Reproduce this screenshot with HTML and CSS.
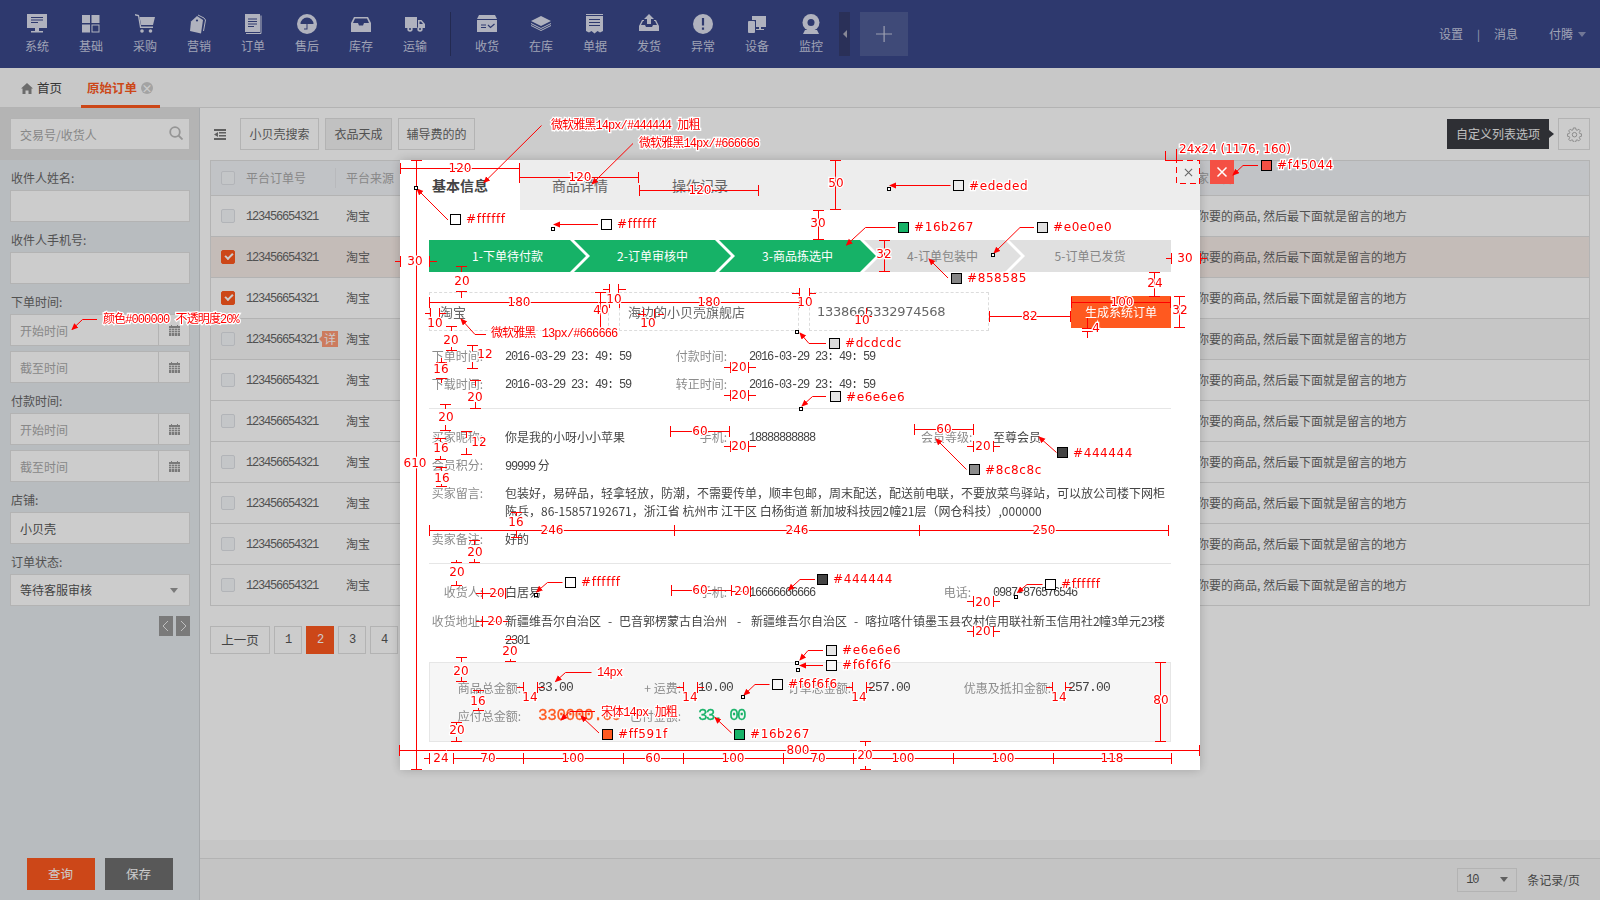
FILE: index.html
```html
<!DOCTYPE html>
<html lang="zh-CN">
<head>
  <meta charset="UTF-8" />
  <title>原始订单</title>
  <link rel="stylesheet" href="styles.css">
</head>
<body>
  <header class="topbar">
    <nav class="nav-group">
      <a class="nav-item"><svg class="nav-icon" viewBox="0 0 20 20"><path d="M0 0h20v14H0zM8 14h4v3H8zM4 17h12v1.500H4z"/><path class="cut" d="M4 3h12v1H4zM4 5.500h12v1H4zM4 8h7v1H4z"/></svg>系统</a>
      <a class="nav-item"><svg class="nav-icon" viewBox="0 0 20 20"><path fill-rule="evenodd" d="M1 1h8v8H1zM10.500 1h8v8h-8zM1 10.500h8v8H1zM10.500 10.500h8v8h-8zM11.500 11.500v6h6v-6z"/></svg>基础</a>
      <a class="nav-item"><svg class="nav-icon" viewBox="0 0 20 20"><path d="M0 0l4 1 2.200 11.500H18V14H5L3 2.200 0 1.500z"/><path d="M4.500 3H20l-2 8H6.200z"/><circle cx="7" cy="17" r="1.800"/><circle cx="15.500" cy="17" r="1.800"/></svg>采购</a>
      <a class="nav-item"><svg class="nav-icon" viewBox="0 0 20 20"><path d="M2 7.500L8 2l6 4-2 13.500L1 17z"/><circle class="cut" cx="8" cy="6.500" r="1.100"/><path class="line" d="M9 1l6 3 1.500 2-2 11"/></svg>营销</a>
      <a class="nav-item"><svg class="nav-icon" viewBox="0 0 20 20"><path d="M2 0h15v18H2z"/><path class="cut" d="M5 4.500h9v1H5zM5 7h9v1H5zM5 9.500h9v1H5zM5 12h6v1H5z"/><path class="line" d="M18 1.500v18H3"/></svg>订单</a>
      <a class="nav-item"><svg class="nav-icon" viewBox="0 0 20 20"><circle cx="10" cy="10" r="10"/><path class="cut" d="M3.500 10a6.500 6.500 0 0 1 13 0zM9.500 10h1v5.500H7v-1h2.500z"/></svg>售后</a>
      <a class="nav-item"><svg class="nav-icon" viewBox="0 0 20 20"><path d="M3 3h14l3 6v9H0V9z"/><path class="cut" d="M4 4.500h12l2 4.500h-5l-1 2.500H8L7 9H2z"/></svg>库存</a>
      <a class="nav-item"><svg class="nav-icon" viewBox="0 0 20 20"><path d="M0 3h12v11H0zM13 6h3.500l3.500 4v4h-7z"/><path class="cut" d="M14.500 7.500h1.500l2 2.500h-3.500z"/><circle cx="5" cy="15" r="2.700"/><circle class="cut" cx="5" cy="15" r="1"/><circle cx="15" cy="15" r="2.700"/><circle class="cut" cx="15" cy="15" r="1"/></svg>运输</a>
    </nav>
    <span class="nav-sep"></span>
    <nav class="nav-group">
      <a class="nav-item"><svg class="nav-icon" viewBox="0 0 20 20"><path d="M2 1h16l2 4H0zM0 6h20v12H0z"/><path class="cut" d="M4 10.500h5v1H4zM4 13h5v1H4z"/><path class="cut-line" d="M11 11l2.500 2.500 4-3.500"/></svg>收货</a>
      <a class="nav-item"><svg class="nav-icon" viewBox="0 0 20 20"><path d="M10 2l10 5-10 5L0 7z"/><path class="line" d="M0 9.500l10 5 10-5M0 11.500l10 5 10-5"/></svg>在库</a>
      <a class="nav-item"><svg class="nav-icon" viewBox="0 0 20 20"><path d="M1 0h17v1H1zM1 2h17v15l-3 1.500-2.500-1.500-3 2.500-3-2.500L4 18.500 1 17z"/><path class="cut" d="M4 5h11v1H4zM4 8h11v1H4zM4 11h11v1H4z"/></svg>单据</a>
      <a class="nav-item"><svg class="nav-icon" viewBox="0 0 20 20"><path d="M10 0l5 5h-3v5H8V5H5zM3 6h2v1H4l-2 4h4l1 2h6l1-2h4l-2-4h-1V6h2l3 6v5H0v-5z"/></svg>发货</a>
      <a class="nav-item"><svg class="nav-icon" viewBox="0 0 20 20"><circle cx="10" cy="10" r="10"/><path class="cut" d="M8.900 4h2.200v7.500H8.900zM8.900 13.500h2.200v2.200H8.900z"/></svg>异常</a>
      <a class="nav-item"><svg class="nav-icon" viewBox="0 0 20 20"><path d="M5 2h14v11h-5v2h3v1H9v-1h3v-2H9V6H5z"/><rect x="1" y="7" width="7" height="12" rx="1"/></svg>设备</a>
      <a class="nav-item"><svg class="nav-icon" viewBox="0 0 20 20"><circle cx="10" cy="8.500" r="8.500"/><circle class="cut" cx="10" cy="8.500" r="3.500"/><path d="M4 16h12l2 4H2z"/></svg>监控</a>
    </nav>
    <span class="nav-toggle"><i class="caret-left"></i></span>
    <span class="nav-add"><svg viewBox="0 0 16 16"><path d="M7.500 0h1.200v7.400H16v1.200H8.700V16H7.500V8.600H0V7.400h7.500z"/></svg></span>
    <div class="top-links">
      <span>设置</span>
      <span class="top-sep">|</span>
      <span>消息</span>
      <span class="top-user">付腾<i class="caret-down"></i></span>
    </div>
  </header>

  <div class="tabbar">
    <a class="page-tab">
      <svg class="home-icon" viewBox="0 0 12 11"><path d="M6 0l6 5.500h-1.500V11H7.500V7.500h-3V11h-3V5.500H0z"/></svg>首页
    </a>
    <a class="page-tab page-tab-on">原始订单<span class="tab-x">×</span></a>
  </div>

  <div class="workspace">
    <aside class="sidebar">
      <div class="side-search">
        <input class="field-input" placeholder="交易号/收货人">
        <svg class="search-icon" viewBox="0 0 14 14"><circle cx="6" cy="6" r="4.800"/><path d="M9.500 9.500L13.500 13.500"/></svg>
      </div>
      <div class="side-form">
        <label class="field-label">收件人姓名:</label>
        <input class="field-input">
        <label class="field-label">收件人手机号:</label>
        <input class="field-input">
        <label class="field-label">下单时间:</label>
        <div class="date-input"><input class="field-input" placeholder="开始时间"><span class="date-btn"><svg viewBox="0 0 11 11"><path d="M2 0h1v1h5V0h1v1h2v10H0V1h2z"/><path class="cal-grid" d="M0 3.500h11M0 5.500h11M0 7.500h11M2.500 3v8M5.500 3v8M8.500 3v8"/></svg></span></div>
        <div class="date-input date-next"><input class="field-input" placeholder="截至时间"><span class="date-btn"><svg viewBox="0 0 11 11"><path d="M2 0h1v1h5V0h1v1h2v10H0V1h2z"/><path class="cal-grid" d="M0 3.500h11M0 5.500h11M0 7.500h11M2.500 3v8M5.500 3v8M8.500 3v8"/></svg></span></div>
        <label class="field-label">付款时间:</label>
        <div class="date-input"><input class="field-input" placeholder="开始时间"><span class="date-btn"><svg viewBox="0 0 11 11"><path d="M2 0h1v1h5V0h1v1h2v10H0V1h2z"/><path class="cal-grid" d="M0 3.500h11M0 5.500h11M0 7.500h11M2.500 3v8M5.500 3v8M8.500 3v8"/></svg></span></div>
        <div class="date-input date-next"><input class="field-input" placeholder="截至时间"><span class="date-btn"><svg viewBox="0 0 11 11"><path d="M2 0h1v1h5V0h1v1h2v10H0V1h2z"/><path class="cal-grid" d="M0 3.500h11M0 5.500h11M0 7.500h11M2.500 3v8M5.500 3v8M8.500 3v8"/></svg></span></div>
        <label class="field-label">店铺:</label>
        <input class="field-input" value="小贝壳">
        <label class="field-label">订单状态:</label>
        <div class="field-select">等待客服审核<i class="caret-down"></i></div>
        <div class="side-pager">
          <span><svg viewBox="0 0 14 20"><path d="M9 5l-5 5 5 5"/></svg></span>
          <span><svg viewBox="0 0 14 20"><path d="M5 5l5 5-5 5"/></svg></span>
        </div>
      </div>
      <div class="side-actions">
        <button class="btn-query">查询</button>
        <button class="btn-save">保存</button>
      </div>
    </aside>

    <main class="main">
      <div class="content">
        <div class="toolbar">
          <svg class="menu-icon" viewBox="0 0 12 11"><path d="M0 0h12v2H0zM5 3h7v1.500H5zM5 6h7v1.500H5zM0 9h12v2H0zM4 3v5L0 5.500z"/></svg>
          <button class="tool-btn">小贝壳搜索</button>
          <button class="tool-btn tool-btn-on">衣品天成</button>
          <button class="tool-btn tool-btn-last">辅导费的的</button>
          <span class="tip">自定义列表选项</span>
          <span class="gear-btn"><svg viewBox="0 0 16 16"><path d="M6.800 1h2.400l.4 2 1.200.5 1.800-1.100 1.600 1.700-1.100 1.700.5 1.200 2 .4v2.400l-2 .4-.5 1.200 1.100 1.700-1.600 1.700-1.800-1.100-1.200.5-.4 2H6.800l-.4-2-1.200-.5-1.800 1.100-1.600-1.700 1.100-1.700-.5-1.200-2-.4V7.400l2-.4.5-1.200-1.100-1.700 1.600-1.700 1.800 1.100L6.400 3z"/><circle cx="8" cy="8.200" r="2.400"/></svg></span>
        </div>

        <div class="order-table">
          <div class="tr th">
            <span class="c-check"><i class="check"></i></span>
            <span class="c-no">平台订单号</span>
            <span class="c-src">平台来源</span>
            <span class="c-msg">买家留言</span>
          </div>
          <div class="tr"><span class="c-check"><i class="check"></i></span><span class="c-no mono">123456654321</span><span class="c-src">淘宝</span><span class="c-msg">是你要的商品, 然后最下面就是留言的地方</span></div>
          <div class="tr tr-on"><span class="c-check"><i class="check check-on"></i></span><span class="c-no mono">123456654321</span><span class="c-src">淘宝</span><span class="c-msg">是你要的商品, 然后最下面就是留言的地方</span></div>
          <div class="tr"><span class="c-check"><i class="check check-on"></i></span><span class="c-no mono">123456654321</span><span class="c-src">淘宝</span><span class="c-msg">是你要的商品, 然后最下面就是留言的地方</span></div>
          <div class="tr tr-hover"><span class="c-check"><i class="check"></i></span><span class="c-no"><span class="mono">123456654321</span><em class="badge">详</em></span><span class="c-src">淘宝</span><span class="c-msg">是你要的商品, 然后最下面就是留言的地方</span></div>
          <div class="tr"><span class="c-check"><i class="check"></i></span><span class="c-no mono">123456654321</span><span class="c-src">淘宝</span><span class="c-msg">是你要的商品, 然后最下面就是留言的地方</span></div>
          <div class="tr"><span class="c-check"><i class="check"></i></span><span class="c-no mono">123456654321</span><span class="c-src">淘宝</span><span class="c-msg">是你要的商品, 然后最下面就是留言的地方</span></div>
          <div class="tr"><span class="c-check"><i class="check"></i></span><span class="c-no mono">123456654321</span><span class="c-src">淘宝</span><span class="c-msg">是你要的商品, 然后最下面就是留言的地方</span></div>
          <div class="tr"><span class="c-check"><i class="check"></i></span><span class="c-no mono">123456654321</span><span class="c-src">淘宝</span><span class="c-msg">是你要的商品, 然后最下面就是留言的地方</span></div>
          <div class="tr"><span class="c-check"><i class="check"></i></span><span class="c-no mono">123456654321</span><span class="c-src">淘宝</span><span class="c-msg">是你要的商品, 然后最下面就是留言的地方</span></div>
          <div class="tr"><span class="c-check"><i class="check"></i></span><span class="c-no mono">123456654321</span><span class="c-src">淘宝</span><span class="c-msg">是你要的商品, 然后最下面就是留言的地方</span></div>
        </div>

        <div class="pager">
          <a class="pg pg-prev">上一页</a>
          <a class="pg mono">1</a>
          <a class="pg mono pg-on">2</a>
          <a class="pg mono">3</a>
          <a class="pg mono">4</a>
        </div>
      </div>
      <div class="band"></div>
      <div class="pagefoot">
        <span class="size-select mono">10<i class="caret-down"></i></span>
        <span>条记录/页</span>
      </div>
    </main>
  </div>

  <div class="mask"></div>

  <section class="modal">
    <div class="modal-tabs">
      <a class="modal-tab modal-tab-on">基本信息</a>
      <a class="modal-tab">商品详情</a>
      <a class="modal-tab">操作记录</a>
      <a class="modal-close"><svg viewBox="0 0 10 10"><path d="M1 1l8 8M9 1l-8 8"/></svg></a>
    </div>
    <div class="modal-body">
      <div class="steps">
        <div class="step step-done step-first">1-下单待付款</div>
        <div class="step step-done">2-订单审核中</div>
        <div class="step step-done">3-商品拣选中</div>
        <div class="step">4-订单包装中</div>
        <div class="step step-last">5-订单已发货</div>
      </div>

      <div class="source-row">
        <div class="source-box">淘宝</div>
        <div class="source-box source-shop">海边的小贝壳旗舰店</div>
        <div class="source-box source-num">1338665332974568</div>
        <button class="btn-make">生成系统订单</button>
      </div>

      <div class="info info-first">
        <span class="k">下单时间:</span><span class="v mono">2016-03-29 23: 49: 59</span>
        <span class="k">付款时间:</span><span class="v mono">2016-03-29 23: 49: 59</span>
      </div>
      <div class="info">
        <span class="k">下载时间:</span><span class="v mono">2016-03-29 23: 49: 59</span>
        <span class="k">转正时间:</span><span class="v mono">2016-03-29 23: 49: 59</span>
      </div>
      <div class="divider divider-a"></div>

      <div class="info">
        <span class="k">买家昵称:</span><span class="v">你是我的小呀小小苹果</span>
        <span class="k">手机:</span><span class="v mono">18888888888</span>
        <span class="k">会员等级:</span><span class="v">至尊会员</span>
      </div>
      <div class="info">
        <span class="k">会员积分:</span><span class="v"><span class="mono">99999</span> 分</span>
      </div>
      <div class="info info-long">
        <span class="k">买家留言:</span>
        <span class="v v-wide">包装好&#65292;易碎品&#65292;轻拿轻放&#65292;防潮&#65292;不需要传单&#65292;顺丰包邮&#65292;周末配送&#65292;配送前电联&#65292;不要放菜鸟驿站&#65292;可以放公司楼下网柜<br>陈兵&#65292;86-15857192671&#65292;浙江省 杭州市 江干区 白杨街道 新加坡科技园2幢21层&#65288;网仓科技&#65289;,000000</span>
      </div>
      <div class="info info-note">
        <span class="k">卖家备注:</span><span class="v">好的</span>
      </div>
      <div class="divider divider-b"></div>

      <div class="info">
        <span class="k">收货人:</span><span class="v">白居易</span>
        <span class="k">手机:</span><span class="v mono">16666666666</span>
        <span class="k">电话:</span><span class="v mono">0987-876576546</span>
      </div>
      <div class="info info-long info-addr">
        <span class="k">收货地址:</span>
        <span class="v v-wide">新疆维吾尔自治区<i class="dash">-</i>巴音郭楞蒙古自治州<i class="dash dash-wide">-</i>新疆维吾尔自治区<i class="dash">-</i>喀拉喀什镇墨玉县农村信用联社新玉信用社<span class="num-tight">2</span>幢<span class="num-tight">3</span>单元<span class="num-tight">23</span>楼<br><span class="mono">2301</span></span>
      </div>

      <div class="summary">
        <span class="k">商品总金额:</span><span class="v mono-lg">33.00</span>
        <span class="k">+ 运费:</span><span class="v mono-lg">10.00</span>
        <span class="k">订单总金额:</span><span class="v mono-lg">257.00</span>
        <span class="k">优惠及抵扣金额:</span><span class="v mono-lg">257.00</span>
        <span class="k">应付总金额:</span><span class="v amount amount-due">330000.00</span>
        <span class="k">已付金额:</span><span class="v amount amount-paid">33. 00</span>
      </div>
    </div>
  </section>

  <!-- redline notes from the designer, drawn over the whole page -->
  <svg class="redline" viewBox="0 0 1600 900">
    <defs>
      <marker id="ah" markerWidth="7" markerHeight="7" refX="6" refY="3" orient="auto" markerUnits="userSpaceOnUse"><path d="M0 0L7 3 0 6z" fill="#f00"/></marker>
    </defs>

    <rect x="1210" y="160" width="24" height="24" fill="#f45044"/>
    <path d="M1217.500 167.500l9 9M1226.500 167.500l-9 9" stroke="#fff" stroke-width="1.500" fill="none"/>
    <rect class="dashbox" x="1176.500" y="160.500" width="23" height="23"/>

    <g class="dims">
      <path d="M400.500 168.500H519.500M400.500 163v11M519.500 163v11"/>
      <path d="M519.500 177.500H638.500M519.500 172v11M638.500 172v11"/>
      <path d="M639.500 190.500H758.500M639.500 185v11M758.500 185v11"/>
      <path d="M416.500 160.500V769.500M411 160.500h11M411 769.500h11"/>
      <path d="M395 261.500h5.500M400.500 256v11M429.500 256v11M429.500 261.500h7"/>
      <path d="M461.500 266v6M456 266.500h11M461.500 292v6M456 291.500h11"/>
      <path d="M429.500 302.500H609.500M429.500 297v11M609.500 297v11"/>
      <path d="M603 289.500h6.500M609.500 284v11M618.500 284v11M618.500 289.500h7"/>
      <path d="M600.500 292v38M595 292.500h11M595 330.500h11"/>
      <path d="M619.500 302.500H799.500M619.500 297v11M799.500 297v11"/>
      <path d="M425 313.500h6M430.500 308v11M439.500 308v11M439.500 313.500h6"/>
      <path d="M638 314.500h8M658 314.500h6M643.500 309v11M654.500 309v11"/>
      <path d="M451.500 327v4M446 326.500h11M451.500 347v4M446 350.500h11"/>
      <path d="M792 293.500h7M799.500 288v11M809.500 288v11M809.500 293.500h6"/>
      <path d="M866.500 308v8M861 316.500h11"/>
      <path d="M472.500 345v6M467 345.500h11M472.500 362v6M467 368.500h11"/>
      <path d="M441.500 358v4M436 362.500h11M441.500 378v5M436 378.500h11"/>
      <path d="M475.500 380v6M470 380.500h11M475.500 402v6M470 408.500h11"/>
      <path d="M445.500 404v5M440 404.500h11M445.500 425v5M440 430.500h11"/>
      <path d="M724 367.500h6.500M730.500 362v11M748.500 362v11M748.500 367.500h7"/>
      <path d="M724 395.500h6.500M730.500 390v11M748.500 390v11M748.500 395.500h7"/>
      <path d="M724 446.500h6.500M730.500 441v11M748.500 441v11M748.500 446.500h7"/>
      <path d="M670.500 431.500H729.500M670.500 426v11M729.500 426v11"/>
      <path d="M466.500 432v6M461 431.500h11M466.500 448v7M461 454.500h11"/>
      <path d="M440.500 438v4M435 438.500h11M440.500 456v4M435 459.500h11"/>
      <path d="M441.500 468v3M436 467.500h11M441.500 484v3M436 486.500h11"/>
      <path d="M516.500 513v3M511 512.500h11M516.500 530v8M511 537.500h11"/>
      <path d="M429.500 530.500H1168.500M429.500 525v11M674.500 525v11M919.500 525v11M1168.500 525v11"/>
      <path d="M474.500 540v5M469 540.500h11M474.500 559v4M469 562.500h11"/>
      <path d="M456.500 560v3M451 562.500h11M456.500 581v4M451 585.500h11"/>
      <path d="M914.500 429.500H973.500M914.500 424v11M973.500 424v11"/>
      <path d="M967 446.500h6.500M973.500 441v11M993.500 441v11M993.500 446.500h6"/>
      <path d="M1165.500 151v10M1165.500 160.500h11M1176.500 149v11"/>
      <path d="M835.500 160.500v49M830 160.500h11M830 209.500h11"/>
      <path d="M818.500 210v29M813 210.500h11M813 239.500h11"/>
      <path d="M884.500 240v31M879 240.500h11M879 271.500h11"/>
      <path d="M1165.500 258.500h5.500M1171.500 253v11M1200.500 253v11M1200.500 258.500h6"/>
      <path d="M1154.500 272v24M1149 272.500h11M1149 296.500h11"/>
      <path d="M1071.500 302.500H1170.500M1071.500 297v11M1170.500 297v11"/>
      <path d="M1179.500 296v31M1174 296.500h11M1174 327.500h11"/>
      <path d="M989.500 316.500H1070.500M989.500 311v11M1070.500 311v11"/>
      <path d="M1087.500 318v10M1082 328.500h11M1087.500 331v7M1082 331.500h11"/>
      <path d="M476 593.500h6.500M482.500 588v11M482.500 593.500H505M505.500 588v11"/>
      <path d="M671.500 590.500H731.500M671.500 585v11M731.500 585v11M731.500 591.500H750M750.500 586v11"/>
      <path d="M967 601.500h6.500M973.500 596v11M993.500 596v11M993.500 601.500h6"/>
      <path d="M967 631.500h6.500M973.500 626v11M993.500 626v11M993.500 631.500h6"/>
      <path d="M476 621.500h6.500M482.500 616v11M482.500 621.500H508"/>
      <path d="M510.500 637v3M505 639.500h11M510.500 659v3M505 661.500h11"/>
      <path d="M461.500 657v5M456 657.500h11M461.500 677v5M456 681.500h11"/>
      <path d="M517 687.500h6.500M523.500 682v11M537.500 682v11M537.500 687.500h6"/>
      <path d="M677 687.500h6.500M683.500 682v11M697.500 682v11M697.500 687.500h6"/>
      <path d="M846 687.500h6.500M852.500 682v11M866.500 682v11M866.500 687.500h6"/>
      <path d="M1046 687.500h6.500M1052.500 682v11M1065.500 682v11M1065.500 687.500h6"/>
      <path d="M478.500 690v3M473 690.500h11M478.500 708v3M473 710.500h11"/>
      <path d="M456.500 722v3M451 722.500h11M456.500 737v5M451 741.500h11"/>
      <path d="M399.500 750.500H1199.500M399.500 745v11M1199.500 745v11"/>
      <path d="M424 758.500h5M429.500 753v11M453.500 753v11M453.500 758.500H1171.500M523.500 753v11M623.500 753v11M683.500 753v11M783.500 753v11M853.500 753v11M953.500 753v11M1053.500 753v11M1171.500 753v11"/>
      <path d="M1160.500 662v80M1155 662.500h11M1155 741.500h11"/>
      <path d="M865.500 742v4M860 741.500h11M865.500 766v4M860 769.500h11"/>
    </g>

    <g class="leads">
      <path d="M541.500 125.500L484 182.500"/>
      <path d="M633 143.500L592 184"/>
      <path d="M448 220L417 189"/>
      <path d="M598 224.500H554"/>
      <path d="M486 334.500H475L461 319"/>
      <path d="M97 319.500H82.500L72 329.500"/>
      <path d="M826 396.500H812.500L802 406"/>
      <path d="M826 343.500H809L800 333"/>
      <path d="M1056.500 452.500L1039 437"/>
      <path d="M966.500 469.500L936 439"/>
      <path d="M950.500 185.500H890"/>
      <path d="M895.500 227.500H865.500L846.500 245"/>
      <path d="M1034 227.500H1020L994 253"/>
      <path d="M948 278L929 259"/>
      <path d="M562.500 582.500H547.500L536.500 592"/>
      <path d="M815 579.500H800L788.500 590"/>
      <path d="M1042.500 584.500H1027L1017.500 592.500"/>
      <path d="M591.500 672.500H565.500L555.500 681.500"/>
      <path d="M769.500 684.500H755L744 695"/>
      <path d="M595 711.500H570L561 720"/>
      <path d="M599 733L581 716"/>
      <path d="M731.500 733L715 717.500"/>
      <path d="M823 650.500H808L800 660"/>
      <path d="M823 665.500H800"/>
      <path d="M1258 165.500H1243L1233 175"/>
    </g>

    <g class="dots">
      <rect x="414" y="186" width="3" height="3"/>
      <rect x="551" y="227" width="3" height="3"/>
      <rect x="887" y="187" width="3" height="3"/>
      <rect x="991" y="253" width="3" height="3"/>
      <rect x="795" y="330" width="3" height="3"/>
      <rect x="799" y="407" width="3" height="3"/>
      <rect x="534" y="593" width="3" height="3"/>
      <rect x="1014" y="595" width="3" height="3"/>
      <rect x="741" y="695" width="3" height="3"/>
      <rect x="795" y="661" width="3" height="3"/>
      <rect x="796" y="668" width="3" height="3"/>
    </g>

    <g class="swatches">
      <rect x="450.500" y="214.500" width="10" height="10" fill="#ffffff"/>
      <rect x="601.500" y="219.500" width="10" height="10" fill="#ffffff"/>
      <rect x="953.500" y="180.500" width="10" height="10" fill="#ededed"/>
      <rect x="898.500" y="222.500" width="10" height="10" fill="#16b267"/>
      <rect x="1037.500" y="222.500" width="10" height="10" fill="#e0e0e0"/>
      <rect x="951.500" y="273.500" width="10" height="10" fill="#858585"/>
      <rect x="829.500" y="338.500" width="10" height="10" fill="#dcdcdc"/>
      <rect x="830.500" y="391.500" width="10" height="10" fill="#e6e6e6"/>
      <rect x="1057.500" y="447.500" width="10" height="10" fill="#444444"/>
      <rect x="969.500" y="464.500" width="10" height="10" fill="#8c8c8c"/>
      <rect x="565.500" y="577.500" width="10" height="10" fill="#ffffff"/>
      <rect x="817.500" y="574.500" width="10" height="10" fill="#444444"/>
      <rect x="1045.500" y="579.500" width="10" height="10" fill="#ffffff"/>
      <rect x="772.500" y="679.500" width="10" height="10" fill="#f6f6f6"/>
      <rect x="826.500" y="645.500" width="10" height="10" fill="#e6e6e6"/>
      <rect x="826.500" y="660.500" width="10" height="10" fill="#f6f6f6"/>
      <rect x="602.500" y="729.500" width="10" height="10" fill="#ff591f"/>
      <rect x="734.500" y="729.500" width="10" height="10" fill="#16b267"/>
      <rect x="1261.500" y="160.500" width="10" height="10" fill="#f45044"/>
    </g>

    <g class="hex">
      <text x="466" y="219">#ffffff</text>
      <text x="617" y="224">#ffffff</text>
      <text x="969" y="186">#ededed</text>
      <text x="914" y="227">#16b267</text>
      <text x="1053" y="227">#e0e0e0</text>
      <text x="967" y="278">#858585</text>
      <text x="845" y="343">#dcdcdc</text>
      <text x="846" y="397">#e6e6e6</text>
      <text x="1073" y="453">#444444</text>
      <text x="985" y="470">#8c8c8c</text>
      <text x="581" y="582">#ffffff</text>
      <text x="833" y="579">#444444</text>
      <text x="1061" y="584">#ffffff</text>
      <text x="788" y="684">#f6f6f6</text>
      <text x="842" y="650">#e6e6e6</text>
      <text x="842" y="665">#f6f6f6</text>
      <text x="618" y="734">#ff591f</text>
      <text x="750" y="734">#16b267</text>
      <text x="1277" y="165">#f45044</text>
      <text class="hex-plain" x="1179" y="149">24x24 (1176, 160)</text>
    </g>

    <g class="dim-text">
      <text x="460" y="168">120</text>
      <text x="580" y="177">120</text>
      <text x="700" y="190">120</text>
      <text x="415" y="463">610</text>
      <text x="415" y="261">30</text>
      <text x="462" y="281">20</text>
      <text x="519" y="302">180</text>
      <text x="709" y="302">180</text>
      <text x="614" y="299">10</text>
      <text x="601" y="310">40</text>
      <text x="435" y="323">10</text>
      <text x="648" y="323">10</text>
      <text x="805" y="302">10</text>
      <text x="862" y="320">10</text>
      <text x="451" y="340">20</text>
      <text x="485" y="354">12</text>
      <text x="441" y="369">16</text>
      <text x="475" y="397">20</text>
      <text x="446" y="417">20</text>
      <text x="739" y="367">20</text>
      <text x="739" y="395">20</text>
      <text x="739" y="446">20</text>
      <text x="700" y="431">60</text>
      <text x="479" y="442">12</text>
      <text x="441" y="448">16</text>
      <text x="442" y="478">16</text>
      <text x="516" y="522">16</text>
      <text x="552" y="530">246</text>
      <text x="797" y="530">246</text>
      <text x="1044" y="530">250</text>
      <text x="475" y="552">20</text>
      <text x="457" y="572">20</text>
      <text x="944" y="429">60</text>
      <text x="983" y="446">20</text>
      <text x="836" y="183">50</text>
      <text x="818" y="223">30</text>
      <text x="884" y="254">32</text>
      <text x="1185" y="258">30</text>
      <text x="1155" y="283">24</text>
      <text x="1122" y="302">100</text>
      <text x="1180" y="310">32</text>
      <text x="1030" y="316">82</text>
      <text x="1096" y="328">4</text>
      <text x="497" y="593">20</text>
      <text x="700" y="590">60</text>
      <text x="742" y="591">20</text>
      <text x="983" y="602">20</text>
      <text x="983" y="631">20</text>
      <text x="495" y="621">20</text>
      <text x="510" y="651">20</text>
      <text x="461" y="671">20</text>
      <text x="530" y="697">14</text>
      <text x="690" y="697">14</text>
      <text x="859" y="697">14</text>
      <text x="1059" y="697">14</text>
      <text x="478" y="701">16</text>
      <text x="457" y="730">20</text>
      <text x="798" y="750">800</text>
      <text x="441" y="758">24</text>
      <text x="488" y="758">70</text>
      <text x="573" y="758">100</text>
      <text x="653" y="758">60</text>
      <text x="733" y="758">100</text>
      <text x="818" y="758">70</text>
      <text x="903" y="758">100</text>
      <text x="1003" y="758">100</text>
      <text x="1112" y="758">118</text>
      <text x="1161" y="700">80</text>
      <text x="865" y="755">20</text>
    </g>

    <g class="note">
      <text x="551" y="126">微软雅黑14px/#444444 加粗</text>
      <text x="639" y="144">微软雅黑14px/#666666</text>
      <text x="491" y="334">微软雅黑 13px/#666666</text>
      <text x="103" y="320">颜色#000000 不透明度20%</text>
      <text x="597" y="673">14px</text>
      <text x="601" y="713">宋体14px 加粗</text>
    </g>
  </svg>
</body>
</html>
```

FILE: styles.css
```css
* {
  box-sizing: border-box;
}

html, body {
  height: 100%;
}

body {
  margin: 0;
  display: flex;
  flex-direction: column;
  height: 900px;
  overflow: hidden;
  background: #fff;
  color: #666;
  font-family: "Noto Sans CJK SC", sans-serif;
  font-size: 12px;
  line-height: 1;
}

a, button, input {
  font: inherit;
  color: inherit;
}

button {
  border: none;
  padding: 0;
  background: none;
}

i, em {
  font-style: normal;
}

.mono {
  font-family: "Liberation Mono", "Noto Sans CJK SC", monospace;
  letter-spacing: -1.2px;
}

.caret-down {
  display: inline-block;
  width: 0;
  height: 0;
  border-left: 4px solid transparent;
  border-right: 4px solid transparent;
  border-top: 5px solid #999;
}

/* top bar */
.topbar {
  display: flex;
  align-items: center;
  flex: none;
  height: 68px;
  padding-left: 10px;
  background: #3a488a;
}

.nav-group {
  display: flex;
  align-self: flex-start;
  padding-top: 14px;
}

.nav-item {
  display: flex;
  flex-direction: column;
  align-items: center;
  width: 54px;
  color: #c8cce2;
  fill: #dcdfee;
}

.nav-icon {
  display: block;
  width: 20px;
  height: 20px;
  margin-bottom: 6px;
  overflow: visible;
}

.nav-icon .cut {
  fill: #3a488a;
}

.nav-icon .cut-line {
  fill: none;
  stroke: #3a488a;
  stroke-width: 1.2;
}

.nav-icon .line {
  fill: none;
  stroke: #dcdfee;
  stroke-width: 1;
}

.nav-sep {
  width: 1px;
  height: 44px;
  margin: 0 9px 0 8px;
  background: #2c3566;
}

.nav-toggle {
  display: flex;
  align-items: center;
  justify-content: center;
  width: 11px;
  height: 44px;
  margin-left: 1px;
  background: #353d6e;
}

.caret-left {
  width: 0;
  height: 0;
  border-top: 4px solid transparent;
  border-bottom: 4px solid transparent;
  border-right: 4px solid #aab;
}

.nav-add {
  display: flex;
  align-items: center;
  justify-content: center;
  width: 48px;
  height: 44px;
  margin-left: 10px;
  background: #4f5d96;
  fill: #c4c8de;
}

.nav-add svg {
  width: 16px;
  height: 16px;
}

.top-links {
  display: flex;
  align-items: center;
  margin-left: auto;
  margin-right: 14px;
  color: #c8cce2;
}

.top-sep {
  margin: 0 14px 0 14px;
  font-size: 11px;
}

.top-user {
  display: flex;
  align-items: center;
  margin-left: 31px;
}

.top-user .caret-down {
  margin-left: 5px;
  border-top-color: #8e95bc;
}

/* tabs under the top bar */
.tabbar {
  display: flex;
  flex: none;
  height: 40px;
  padding-left: 21px;
  background: #fafafa;
  border-bottom: 1px solid #e0e0e0;
}

.page-tab {
  display: flex;
  align-items: center;
  flex: none;
  height: 40px;
  color: #444;
  font-size: 12.500px;
}

.home-icon {
  width: 12px;
  height: 11px;
  margin-right: 4px;
  fill: #888;
}

.page-tab-on {
  margin-left: 19px;
  padding: 0 7px 0 6px;
  color: #ff591f;
  font-weight: 700;
  box-shadow: inset 0 -3px #ff591f;
}

.tab-x {
  display: flex;
  align-items: center;
  justify-content: center;
  width: 12px;
  height: 12px;
  margin-left: 4px;
  border-radius: 50%;
  background: #ccc;
  color: #fff;
  font-size: 11px;
  font-weight: 700;
}

.workspace {
  display: flex;
  flex: 1;
  min-height: 0;
}

/* left filter column */
.sidebar {
  display: flex;
  flex-direction: column;
  flex: none;
  width: 200px;
  background: #e6ebef;
  border-right: 1px solid #d0d4d8;
}

.side-search {
  position: relative;
  height: 52px;
  padding: 10px 9px 10px 10px;
  background: #e2e2e2;
}

.search-icon {
  position: absolute;
  top: 18px;
  right: 16px;
  width: 14px;
  height: 14px;
  fill: none;
  stroke: #bbb;
  stroke-width: 1.800;
}

.side-form {
  display: flex;
  flex-direction: column;
  padding: 0 9px 0 10px;
}

.field-label {
  height: 30px;
  padding: 6px 0 0 1px;
  line-height: 24px;
  color: #666;
}

.field-input {
  display: block;
  flex: none;
  width: 100%;
  height: 32px;
  padding: 0 9px;
  border: 1px solid #e0e0e0;
  background: #fff;
  color: #555;
  outline: none;
}

.field-input::placeholder {
  color: #aaa;
}

.date-input {
  display: flex;
}

.date-next {
  margin-top: 5px;
}

.date-input .field-input {
  flex: 1;
  min-width: 0;
  border-right: none;
}

.date-btn {
  display: flex;
  flex: none;
  align-items: center;
  justify-content: center;
  width: 32px;
  height: 32px;
  border: 1px solid #e0e0e0;
  background: #fff;
  padding-top: 1px;
}

.date-btn svg {
  width: 11px;
  height: 11px;
  fill: #999;
}

.cal-grid {
  fill: none;
  stroke: #fff;
  stroke-width: .6;
}

.field-select {
  display: flex;
  align-items: center;
  justify-content: space-between;
  height: 32px;
  padding: 0 11px 0 9px;
  border: 1px solid #e0e0e0;
  background: #fff;
  color: #555;
}

.side-pager {
  display: flex;
  justify-content: flex-end;
  gap: 3px;
  margin-top: 10px;
}

.side-pager span {
  display: block;
  width: 14px;
  height: 20px;
  background: #999;
}

.side-pager svg {
  display: block;
  fill: none;
  stroke: #eee;
  stroke-width: 1;
}

.side-actions {
  display: flex;
  justify-content: center;
  gap: 10px;
  margin-top: auto;
  padding-bottom: 10px;
}

.side-actions button {
  width: 68px;
  height: 32px;
  font-size: 12.500px;
  color: #fff;
}

.btn-query {
  background: #ff591f;
}

.btn-save {
  background: #6f6f6f;
}

/* right list */
.main {
  display: flex;
  flex-direction: column;
  flex: 1;
  min-width: 0;
}

.content {
  flex: 1;
  min-height: 0;
  padding: 0 10px;
  background: #fff;
}

.toolbar {
  display: flex;
  align-items: center;
  gap: 6px;
  height: 52px;
}

.menu-icon {
  width: 12px;
  height: 11px;
  margin: 0 8px 0 4px;
  fill: #777;
}

.tool-btn {
  height: 32px;
  padding: 0 8.500px;
  border: 1px solid #e0e0e0;
  background: #fff;
  color: #666;
}

.tool-btn-on {
  background: #f2f2f2;
}

.tool-btn-last {
  padding: 0 7.500px;
}

.tip {
  position: relative;
  display: flex;
  align-items: center;
  height: 30px;
  margin-left: auto;
  margin-right: 3px;
  padding: 0 9px;
  background: #3a3b42;
  color: #f0f0f0;
}

.tip::after {
  content: "";
  position: absolute;
  left: 100%;
  top: 11px;
  border-left: 5px solid #3a3b42;
  border-top: 4px solid transparent;
  border-bottom: 4px solid transparent;
}

.gear-btn {
  display: flex;
  align-items: center;
  justify-content: center;
  width: 32px;
  height: 32px;
  border: 1px solid #e0e0e0;
}

.gear-btn svg {
  width: 15px;
  height: 15px;
  fill: none;
  stroke: #aaa;
  stroke-width: 1;
}

.order-table {
  border: 1px solid #e0e0e0;
  border-bottom: none;
}

.tr {
  display: flex;
  align-items: center;
  height: 41px;
  border-bottom: 1px solid #e0e0e0;
  color: #666;
}

.th {
  height: 35px;
  background: #f2f4f8;
  color: #aaa;
}

.tr-on {
  background: #f6ebe6;
}

.tr-hover {
  background: #f8f8f8;
}

.c-check {
  display: flex;
  flex: none;
  width: 35px;
  padding-left: 10px;
}

.c-no {
  position: relative;
  display: flex;
  align-items: center;
  flex: none;
  width: 100px;
}

.c-no.mono,
.c-no .mono {
  padding-top: 1px;
}

.th .c-no::after {
  content: "";
  position: absolute;
  left: 89px;
  top: -4px;
  width: 1px;
  height: 20px;
  background: #e6e8ec;
}

.c-src {
  flex: none;
  width: 839px;
}

.c-msg {
  flex: 1;
  white-space: nowrap;
}

.check {
  display: block;
  position: relative;
  width: 14px;
  height: 14px;
  border: 1px solid #dfe2e7;
  border-radius: 2px;
  background: #f6f8fb;
}

.check-on {
  border-color: #ff591f;
  background: #ff591f;
}

.check-on::after {
  content: "";
  position: absolute;
  left: 3px;
  top: 2px;
  width: 6px;
  height: 3px;
  border-left: 2px solid #fff;
  border-bottom: 2px solid #fff;
  transform: rotate(-45deg);
}

.badge {
  position: relative;
  display: flex;
  align-items: center;
  justify-content: center;
  width: 16px;
  height: 16px;
  margin-left: 4px;
  background: #ff9a76;
  color: #fff;
}

.badge::before {
  content: "";
  position: absolute;
  right: 100%;
  top: 5px;
  border-right: 3px solid #ff9a76;
  border-top: 3px solid transparent;
  border-bottom: 3px solid transparent;
}

.pager {
  display: flex;
  gap: 4px;
  margin-top: 20px;
}

.pg {
  display: flex;
  align-items: center;
  justify-content: center;
  width: 28px;
  height: 28px;
  border: 1px solid #e0e0e0;
  color: #555;
}

.pg-prev {
  width: 60px;
  color: #555;
  font-size: 12.500px;
}

.pg-on {
  border-color: #ff591f;
  background: #ff591f;
  color: #fff;
}

.band {
  flex: none;
  height: 18px;
  background: #f8f8f8;
}

.pagefoot {
  display: flex;
  align-items: center;
  justify-content: flex-end;
  gap: 10px;
  flex: none;
  height: 42px;
  padding-right: 20px;
  border-top: 1px solid #e0e0e0;
  background: #f5f5f5;
  color: #555;
}

.size-select {
  display: flex;
  align-items: center;
  justify-content: space-between;
  width: 60px;
  height: 24px;
  padding: 0 8px;
  border: 1px solid #e0e0e0;
}

.size-select .caret-down {
  border-top-color: #777;
}

/* 20% black layer behind the dialog */
.mask {
  position: fixed;
  inset: 0;
  z-index: 10;
  background: rgba(0, 0, 0, .2);
}

/* dialog */
.modal {
  position: fixed;
  left: 400px;
  top: 160px;
  z-index: 20;
  width: 800px;
  height: 610px;
  background: #fff;
  box-shadow: 0 0 10px rgba(0, 0, 0, .2);
}

.modal-tabs {
  position: relative;
  display: flex;
  height: 50px;
  background: #ededed;
}

.modal-tab {
  display: flex;
  align-items: center;
  justify-content: center;
  width: 120px;
  font-size: 14px;
  color: #666;
}

.modal-tab-on {
  background: #fff;
  color: #444;
  font-weight: 700;
}

.modal-close {
  position: absolute;
  right: 0;
  top: 0;
  display: flex;
  align-items: center;
  justify-content: center;
  width: 24px;
  height: 24px;
}

.modal-close svg {
  width: 9px;
  height: 9px;
  fill: none;
  stroke: #666;
  stroke-width: 1.200;
}

.modal-body {
  padding: 30px 29px 0;
  color: #444;
}

.steps {
  display: flex;
  height: 32px;
}

.step {
  display: flex;
  align-items: center;
  justify-content: center;
  flex: none;
  width: 157px;
  margin-left: -12px;
  background: #e0e0e0;
  color: #858585;
  clip-path: polygon(0 0, calc(100% - 16px) 0, 100% 50%, calc(100% - 16px) 100%, 0 100%, 16px 50%);
}

.step-done {
  background: #16b267;
  color: #fff;
}

.step-first {
  margin-left: 0;
  clip-path: polygon(0 0, calc(100% - 16px) 0, 100% 50%, calc(100% - 16px) 100%, 0 100%);
}

.step-last {
  width: 162px;
  clip-path: polygon(0 0, 100% 0, 100% 100%, 0 100%, 16px 50%);
}

.source-row {
  display: flex;
  gap: 10px;
  margin-top: 20px;
}

.source-box {
  display: flex;
  align-items: center;
  width: 180px;
  height: 39px;
  padding: 0 10px;
  border: 1px dashed #dcdcdc;
  font-size: 13px;
  color: #666;
}

.source-shop {
  padding-left: 8px;
}

.source-num {
  padding-left: 7px;
  font-family: "DejaVu Sans", sans-serif;
  letter-spacing: -.25px;
}

.btn-make {
  width: 100px;
  height: 32px;
  margin: 4px 0 0 72px;
  background: #ff591f;
  color: #fff;
}

.info {
  display: grid;
  grid-template-columns: 76px 170px 74px 172px 72px 178px;
  height: 12px;
  margin-top: 16px;
  line-height: 12px;
  white-space: nowrap;
}

.info-first {
  margin-top: 19px;
}

.k {
  padding-right: 22px;
  text-align: right;
  color: #8c8c8c;
}

.info .v.mono {
  padding-top: 1px;
}

.info-long {
  height: 36px;
  margin-top: 13px;
  line-height: 18px;
  white-space: normal;
}

.info-long .k {
  line-height: 18px;
}

.v-wide {
  grid-column: 2 / 7;
}

.info-note {
  margin-top: 13px;
}

.divider {
  height: 1px;
  background: #e6e6e6;
}

.divider-a {
  margin: 18px 0 22px;
}

.divider-b {
  margin: 18px 0 22px;
}

.info-addr {
  margin-top: 14px;
}

.dash {
  display: inline-block;
  width: 18px;
  text-align: center;
}

.dash-wide {
  width: 24px;
}

.num-tight {
  letter-spacing: -.7px;
}

.summary {
  display: grid;
  grid-template-columns: 94px 100px 60px 100px 70px 100px 100px 116px;
  grid-auto-rows: 12px;
  row-gap: 16px;
  height: 80px;
  margin-top: 14px;
  padding-top: 19px;
  border: 1px solid #e6e6e6;
  background: #f6f6f6;
  line-height: 12px;
  white-space: nowrap;
}

.summary .k {
  padding-right: 3px;
}

.summary .v {
  padding-left: 14px;
}

.mono-lg {
  font-family: "Liberation Mono", monospace;
  font-size: 13px;
  letter-spacing: -.8px;
}

.amount {
  font-family: "Liberation Mono", monospace;
  font-size: 16px;
  line-height: 12px;
  letter-spacing: -.4px;
  -webkit-text-stroke: .3px currentColor;
}

.amount-due {
  color: #ff591f;
}

.amount-paid {
  color: #16b267;
  letter-spacing: -1.800px;
}

/* redline layer */
.redline {
  position: fixed;
  left: 0;
  top: 0;
  z-index: 30;
  width: 1600px;
  height: 900px;
  pointer-events: none;
}

.dims path {
  fill: none;
  stroke: #f00;
  stroke-width: 1;
  shape-rendering: crispEdges;
}

.leads path {
  fill: none;
  stroke: #f00;
  stroke-width: 1;
  marker-end: url(#ah);
}

.dashbox {
  fill: none;
  stroke: #f00;
  stroke-dasharray: 6 4;
  shape-rendering: crispEdges;
}

.dots rect {
  fill: #fff;
  stroke: #000;
  stroke-width: 1;
  shape-rendering: crispEdges;
}

.swatches rect {
  stroke: #000;
  stroke-width: 1;
  shape-rendering: crispEdges;
}

.redline text {
  fill: #f00;
  stroke: #fff;
  stroke-width: 2.500px;
  paint-order: stroke;
  dominant-baseline: central;
}

.hex text {
  font-family: "DejaVu Sans", sans-serif;
  font-size: 12px;
  letter-spacing: .6px;
}

.hex .hex-plain {
  letter-spacing: 0;
}

.dim-text text {
  font-family: "DejaVu Sans", sans-serif;
  font-size: 12px;
  text-anchor: middle;
}

.note text {
  font-family: "Liberation Mono", "Noto Sans CJK SC", monospace;
  font-size: 12px;
  letter-spacing: -.9px;
}
```
